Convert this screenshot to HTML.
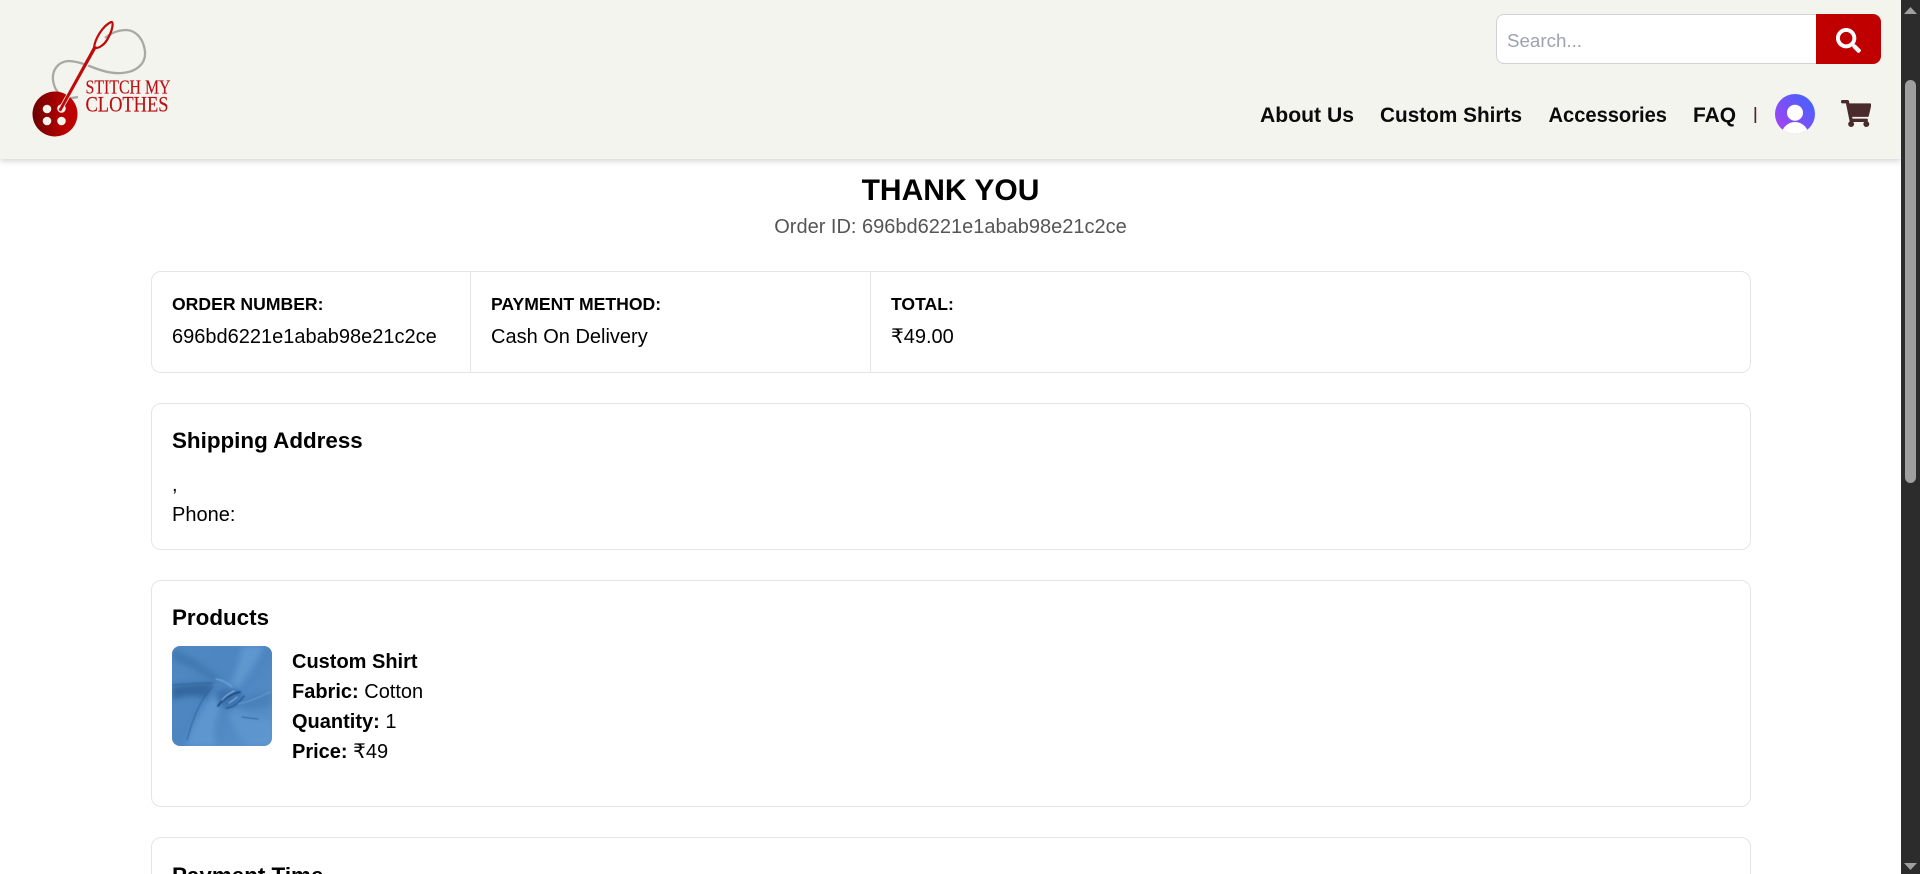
<!DOCTYPE html>
<html lang="en">
<head>
<meta charset="utf-8">
<title>Thank You</title>
<style>
html,body{margin:0;padding:0;width:1920px;height:874px;overflow:hidden;background:#fff;font-family:"Liberation Sans",Arial,sans-serif;color:#000}
#wrap{position:relative;width:1920px;height:874px;overflow:hidden;background:#fff}
.a{position:absolute;white-space:nowrap;line-height:20px}
.b{font-weight:700}
.card{position:absolute;left:151px;width:1598px;border:1px solid #e5e5e5;border-radius:10px;background:#fff}
#hd{position:absolute;left:0;top:0;width:1901px;height:159px;background:#f4f4ef;box-shadow:0 2px 6px rgba(0,0,0,.18)}
#sb{position:absolute;left:1901px;top:0;width:19px;height:874px;background:#2c2c2c}
#th{position:absolute;left:1905px;top:80px;width:11px;height:403px;border-radius:6px;background:#9f9f9f}
#inp{position:absolute;left:1496px;top:14px;width:322px;height:48px;background:#fff;border:1px solid #d1d1dc;border-right:0;border-radius:8px 0 0 8px}
#btn{position:absolute;left:1816px;top:14px;width:65px;height:50px;background:#c00000;border-radius:0 8px 8px 0}
#clip{position:absolute;left:151px;top:837px;width:1600px;height:37px;overflow:hidden}
svg{position:absolute;display:block}
</style>
</head>
<body>
<div id="wrap">

<div class="card" style="top:271px;height:100px"></div>
<div style="position:absolute;left:470px;top:272px;width:1px;height:100px;background:#e5e5e5"></div>
<div style="position:absolute;left:870px;top:272px;width:1px;height:100px;background:#e5e5e5"></div>
<div class="a b" style="left:172px;top:294px;font-size:17.6px">ORDER NUMBER:</div>
<div class="a" style="left:172px;top:327px;font-size:20px">696bd6221e1abab98e21c2ce</div>
<div class="a b" style="left:491px;top:294px;font-size:17.6px">PAYMENT METHOD:</div>
<div class="a" style="left:491px;top:327px;font-size:20px">Cash On Delivery</div>
<div class="a b" style="left:891px;top:294px;font-size:17.6px">TOTAL:</div>
<div class="a" style="left:891px;top:327px;font-size:20px;font-family:'Liberation Sans','DejaVu Sans',sans-serif">₹49.00</div>

<div class="card" style="top:403px;height:145px"></div>
<div class="a b" style="left:172px;top:431px;font-size:22.4px">Shipping Address</div>
<div class="a" style="left:172px;top:475px;font-size:20px">,</div>
<div class="a" style="left:172px;top:505px;font-size:20px">Phone:</div>

<div class="card" style="top:580px;height:225px"></div>
<div class="a b" style="left:172px;top:608px;font-size:22.4px">Products</div>
<svg style="left:172px;top:646px" width="100" height="100" viewBox="0 0 100 100">
<defs>
<clipPath id="fc"><rect width="100" height="100" rx="8"/></clipPath>
<linearGradient id="fb" x1="0" y1="0" x2="1" y2="1"><stop offset="0" stop-color="#5088c2"/><stop offset=".5" stop-color="#4c85c0"/><stop offset="1" stop-color="#5a93cb"/></linearGradient>
<filter id="f1"><feGaussianBlur stdDeviation=".6"/></filter>
<filter id="f2"><feGaussianBlur stdDeviation="3"/></filter>
</defs>
<g clip-path="url(#fc)">
<rect width="100" height="100" fill="url(#fb)"/>
<g filter="url(#f2)">
<path d="M0 40C18 38 30 37 42 37L34 52C22 48 10 50 0 54Z" fill="#2f6098" opacity=".85"/>
<path d="M0 2C20 10 36 22 50 34L42 36C28 26 12 18 0 14Z" fill="#3c74ad" opacity=".7"/>
<path d="M100 74C84 72 72 68 64 62L56 70C62 84 70 94 76 100H100Z" fill="#5f98d0" opacity=".7"/>
<path d="M70 0C68 14 64 26 58 38L66 42C76 30 86 14 92 0Z" fill="#659dd4" opacity=".75"/>
<path d="M14 100C20 80 30 62 42 50L50 60C44 70 40 86 44 100Z" fill="#629bd3" opacity=".8"/>
<path d="M100 44C86 46 76 50 68 54L66 60C76 64 90 62 100 60Z" fill="#3f74ad" opacity=".4"/>
<path d="M44 46C50 42 62 42 70 46L66 58C58 64 50 62 46 58Z" fill="#326aa5" opacity=".7"/>
</g>
<g filter="url(#f1)" fill="none" stroke-linecap="round">
<path d="M46 60C50 54 58 48 68 46" stroke="#1f4a7c" stroke-width="1.800"/>
<path d="M54 62C60 62 66 58 72 50" stroke="#28568b" stroke-width="1.300"/>
<path d="M50 54C53 50 58 47 62 45" stroke="#8ab9e4" stroke-width="1"/>
<path d="M57 57C60 55 63 53 65 51" stroke="#8ab9e4" stroke-width="1"/>
<path d="M44 33C50 34 56 37 60 41" stroke="#88b6e0" stroke-width="1.200" opacity=".7"/>
<path d="M40 41C28 54 21 72 15 94" stroke="#2f5f96" stroke-width="1.100" opacity=".8"/>
<path d="M70 71C76 72 82 72.500 86 73" stroke="#28568e" stroke-width="1" opacity=".8"/>
<path d="M0 39C14 38 28 37 40 37" stroke="#2f5f96" stroke-width=".9" opacity=".8"/>
<path d="M66 58C76 56 86 52 98 46" stroke="#7aaddd" stroke-width="1.100" opacity=".6"/>
</g>
</g>
</svg>
<div class="a b" style="left:292px;top:652px;font-size:20px">Custom Shirt</div>
<div class="a" style="left:292px;top:682px;font-size:20px"><b>Fabric:</b> Cotton</div>
<div class="a" style="left:292px;top:712px;font-size:20px"><b>Quantity:</b> 1</div>
<div class="a" style="left:292px;top:742px;font-size:20px;font-family:'Liberation Sans','DejaVu Sans',sans-serif"><b>Price:</b> ₹49</div>

<div id="clip">
<div style="position:absolute;left:0;top:0;width:1598px;height:120px;border:1px solid #e5e5e5;border-radius:10px"></div>
<div class="a b" style="left:21px;top:29px;font-size:22.4px">Payment Time</div>
</div>

<div class="a b" style="left:0;width:1901px;text-align:center;top:176px;font-size:30px;line-height:30px">THANK YOU</div>
<div class="a" style="left:0;width:1901px;text-align:center;top:217px;font-size:20px;color:#555">Order ID: 696bd6221e1abab98e21c2ce</div>

<div id="hd"></div>

<svg style="left:0;top:0" width="240" height="159" viewBox="0 0 240 159">
<defs>
<linearGradient id="bt" x1="0" x2="1" y1="0" y2="0"><stop offset="0" stop-color="#6d0000"/><stop offset=".7" stop-color="#b80000"/><stop offset="1" stop-color="#c00404"/></linearGradient>
</defs>
<path d="M105 38C112 32 120 30 127 30C137 31 144 40 145 52C146 64 136 72 122 73C112 74 102 71 92 67C84 64 76 61 68 61C58 62 52 70 53 80C54 88 58 94 64 97C68 99 72 98 78 97" fill="none" stroke="#a8a8a5" stroke-width="2.300"/>
<circle cx="55" cy="114" r="22.500" fill="url(#bt)"/>
<circle cx="47" cy="109" r="4.300" fill="#f4f4ef"/>
<circle cx="47" cy="121" r="4.300" fill="#f4f4ef"/>
<circle cx="61.500" cy="121" r="4.300" fill="#f4f4ef"/>
<circle cx="61.500" cy="108.500" r="4.300" fill="#f4f4ef"/>
<path d="M60 110L95 49" stroke="#f4f4ef" stroke-width="4.500" fill="none"/>
<path d="M58.500 110L61 111.500L97 47L94 45.500Z" fill="#c00a0a"/>
<path d="M94 48C95 38 103 26 111 22C114 21 113 30 107 40C104 45 99 48 96 48Z" fill="none" stroke="#c00a0a" stroke-width="2.200"/>
<text x="85.500" y="93.500" font-family="Liberation Serif,serif" font-size="19.500" fill="#b90f14" stroke="#b90f14" stroke-width=".15" textLength="85" lengthAdjust="spacingAndGlyphs">STITCH MY</text>
<text x="85.500" y="111.500" font-family="Liberation Serif,serif" font-size="22.500" fill="#b90f14" stroke="#b90f14" stroke-width=".15" textLength="83" lengthAdjust="spacingAndGlyphs">CLOTHES</text>
</svg>

<div id="inp"></div>
<svg style="left:1496px;top:14px" width="320" height="50"><text x="11" y="33" font-family="Liberation Sans,sans-serif" font-size="18" fill="#9ca3af" textLength="75" lengthAdjust="spacingAndGlyphs">Search...</text></svg>
<div id="btn"></div>
<svg style="left:1836px;top:28px" width="25" height="25" viewBox="0 0 512 512"><path fill="#fff" d="M505 442.7L405.300 343c-4.500-4.500-10.600-7-17-7H372c27.600-35.300 44-79.700 44-128C416 93.100 322.900 0 208 0S0 93.100 0 208s93.100 208 208 208c48.300 0 92.700-16.400 128-44v16.300c0 6.400 2.500 12.500 7 17l99.700 99.700c9.400 9.400 24.600 9.400 33.900 0l28.300-28.300c9.400-9.400 9.400-24.600.1-34zM208 336c-70.700 0-128-57.200-128-128 0-70.700 57.200-128 128-128 70.700 0 128 57.200 128 128 0 70.700-57.200 128-128 128z"/></svg>

<svg style="left:1250px;top:95px" width="530" height="40">
<g font-family="Liberation Sans,sans-serif" font-weight="700" font-size="21" fill="#0b0b0b">
<text x="10" y="27" textLength="94" lengthAdjust="spacingAndGlyphs">About Us</text>
<text x="130" y="27" textLength="142" lengthAdjust="spacingAndGlyphs">Custom Shirts</text>
<text x="298.500" y="27" textLength="118.500" lengthAdjust="spacingAndGlyphs">Accessories</text>
<text x="443" y="27" textLength="43" lengthAdjust="spacingAndGlyphs">FAQ</text>
</g>
<rect x="504.500" y="12" width="1.700" height="16" fill="#4a2a2a"/>
</svg>

<svg style="left:1775px;top:94px" width="40" height="40" viewBox="0 0 40 40">
<defs>
<linearGradient id="av" x1="0" y1="1" x2="1" y2="0"><stop offset="0" stop-color="#b03ff0"/><stop offset="1" stop-color="#3a66ff"/></linearGradient>
<clipPath id="avc"><circle cx="20" cy="20" r="20"/></clipPath>
</defs>
<circle cx="20" cy="20" r="20" fill="url(#av)"/>
<g clip-path="url(#avc)" fill="#fff"><circle cx="20" cy="18.700" r="8"/><ellipse cx="20" cy="43" rx="14" ry="15"/></g>
</svg>

<svg style="left:1841px;top:100px" width="30.400" height="27" viewBox="0 0 576 512"><path fill="#4a2a2a" d="M528.120 301.319l47.273-208C578.806 78.301 567.391 64 551.990 64H159.208l-9.166-44.810C147.758 8.021 137.930 0 126.529 0H24C10.745 0 0 10.745 0 24v16c0 13.255 10.745 24 24 24h69.883l70.248 343.435C147.325 417.100 136 435.222 136 456c0 30.928 25.072 56 56 56s56-25.072 56-56c0-15.674-6.447-29.835-16.824-40h209.647C430.447 426.165 424 440.326 424 456c0 30.928 25.072 56 56 56s56-25.072 56-56c0-22.172-12.888-41.332-31.579-50.405l5.517-24.276c3.413-15.018-8.002-29.319-23.403-29.319H218.117l-6.545-32h293.145c11.206 0 20.920-7.754 23.403-18.681z"/></svg>

<div id="sb"></div>
<div id="th"></div>
<svg style="left:1901px;top:0" width="19" height="874">
<path d="M3 14L9.500 7L16 14Z" fill="#9f9f9f"/>
<path d="M3 863L9.500 870L16 863Z" fill="#9f9f9f"/>
</svg>
</div>
</body>
</html>
